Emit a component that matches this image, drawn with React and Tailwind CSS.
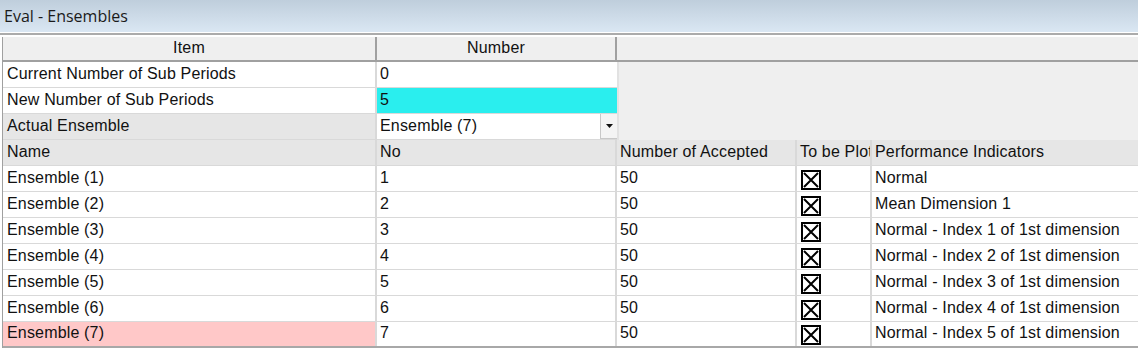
import React from "react";

const rows = [
  ["Ensemble (1)", "1", "50", "Normal"],
  ["Ensemble (2)", "2", "50", "Mean Dimension 1"],
  ["Ensemble (3)", "3", "50", "Normal - Index 1 of 1st dimension"],
  ["Ensemble (4)", "4", "50", "Normal - Index 2 of 1st dimension"],
  ["Ensemble (5)", "5", "50", "Normal - Index 3 of 1st dimension"],
  ["Ensemble (6)", "6", "50", "Normal - Index 4 of 1st dimension"],
  ["Ensemble (7)", "7", "50", "Normal - Index 5 of 1st dimension"],
];

function XBox() {
  return (
    <svg width="20" height="20" viewBox="0 0 20 20" className="block">
      <rect x="1" y="1" width="18" height="18" fill="white" stroke="black" strokeWidth="2" />
      <path d="M3 3 L17 17 M17 3 L3 17" stroke="black" strokeWidth="2" />
    </svg>
  );
}

export default function App() {
  return (
    <div
      className="w-[1138px] h-[350px] bg-white overflow-hidden text-[16px] tracking-[0.17px] leading-none text-[#111]"
      style={{ fontFamily: '"Liberation Sans", Arial, sans-serif' }}
    >
      {/* title bar */}
      <div
        className="h-[32px] flex items-center pl-[4px] bg-gradient-to-b from-[#bfcedc] to-[#dae7f3] text-[16px] tracking-normal text-[#1a1a1a]"
        style={{ fontFamily: '"Open Sans", "Noto Sans", sans-serif' }}
      >
        Eval - Ensembles
      </div>
      <div className="h-[1px] bg-white" />
      <div className="h-[2px] bg-[#ababab]" />
      <div className="h-[2px] bg-white" />

      <div className="flex pl-[2px] bg-white">
        <div className="flex-1 border-l border-[#a0a0a0]">
          {/* header */}
          <div className="flex h-[25px] bg-[#efefef] border-b-2 border-[#a0a0a0]">
            <div className="w-[374px] flex items-center justify-center pb-[1px] border-r-2 border-[#a0a0a0]">Item</div>
            <div className="w-[240px] flex items-center justify-center pb-[1px] border-r-2 border-[#a0a0a0]">Number</div>
            <div className="flex-1" />
          </div>

          <div className="flex">
            <div className="w-[614px]">
              <div className="flex h-[26px] border-b border-[#d9d9d9]">
                <div className="w-[374px] pl-[4px] pb-[2px] flex items-center border-r-2 border-[#d9d9d9]">Current Number of Sub Periods</div>
                <div className="flex-1 pl-[3px] pb-[2px] flex items-center">0</div>
              </div>
              <div className="flex h-[26px] border-b border-[#d9d9d9]">
                <div className="w-[374px] pl-[4px] pb-[2px] flex items-center border-r-2 border-[#d9d9d9]">New Number of Sub Periods</div>
                <div className="flex-1 pl-[3px] pb-[2px] flex items-center bg-[#2aeeee]">5</div>
              </div>
              <div className="flex h-[26px] border-b border-[#d9d9d9]">
                <div className="w-[374px] pl-[4px] pb-[2px] flex items-center bg-[#e6e6e6] border-r-2 border-[#d9d9d9]">Actual Ensemble</div>
                <div className="flex-1 pl-[3px] flex items-center justify-between bg-white">
                  <span className="pb-[2px]">Ensemble (7)</span>
                  <div className="w-[17px] h-[25px] bg-[#f4f4f4] border-l border-b border-[#c8c8c8] flex items-center justify-center">
                    <svg width="7" height="4" viewBox="0 0 7 4"><path d="M0 0 H7 L3.5 4 Z" fill="#111" /></svg>
                  </div>
                </div>
              </div>
            </div>
            <div className="flex-1 bg-[#efefef] border-l-2 border-[#e2e2e2]" />
          </div>

          {/* grid header */}
          <div className="flex h-[26px] bg-[#e6e6e6] border-b border-[#d9d9d9]">
            <div className="w-[374px] pl-[4px] pb-[2px] flex items-center border-r-2 border-[#d9d9d9]">Name</div>
            <div className="w-[240px] pl-[3px] pb-[2px] flex items-center border-r-2 border-[#d9d9d9]">No</div>
            <div className="w-[180px] pl-[3px] pb-[2px] flex items-center border-r-2 border-[#d9d9d9]">Number of Accepted</div>
            <div className="w-[75px] pl-[3px] pb-[2px] flex items-center border-r-2 border-[#d9d9d9] overflow-hidden whitespace-nowrap">To be Plotted</div>
            <div className="flex-1 pl-[3px] pb-[2px] flex items-center">Performance Indicators</div>
          </div>

          {rows.map((r, i) => (
            <div
              key={i}
              className={`flex h-[26px] ${i === rows.length - 1 ? "border-b-2 border-[#a8a8a8]" : "border-b border-[#d9d9d9]"}`}
            >
              <div className={`w-[374px] pl-[4px] pb-[2px] flex items-center border-r-2 border-[#d9d9d9] ${i === rows.length - 1 ? "bg-[#ffc8c8]" : ""}`}>{r[0]}</div>
              <div className="w-[240px] pl-[3px] pb-[2px] flex items-center border-r-2 border-[#d9d9d9]">{r[1]}</div>
              <div className="w-[180px] pl-[3px] pb-[2px] flex items-center border-r-2 border-[#d9d9d9]">{r[2]}</div>
              <div className="w-[75px] pl-[4px] pt-[2px] flex items-center border-r-2 border-[#d9d9d9]"><XBox /></div>
              <div className="flex-1 pl-[3px] pb-[2px] flex items-center">{r[3]}</div>
            </div>
          ))}
        </div>
      </div>
    </div>
  );
}
